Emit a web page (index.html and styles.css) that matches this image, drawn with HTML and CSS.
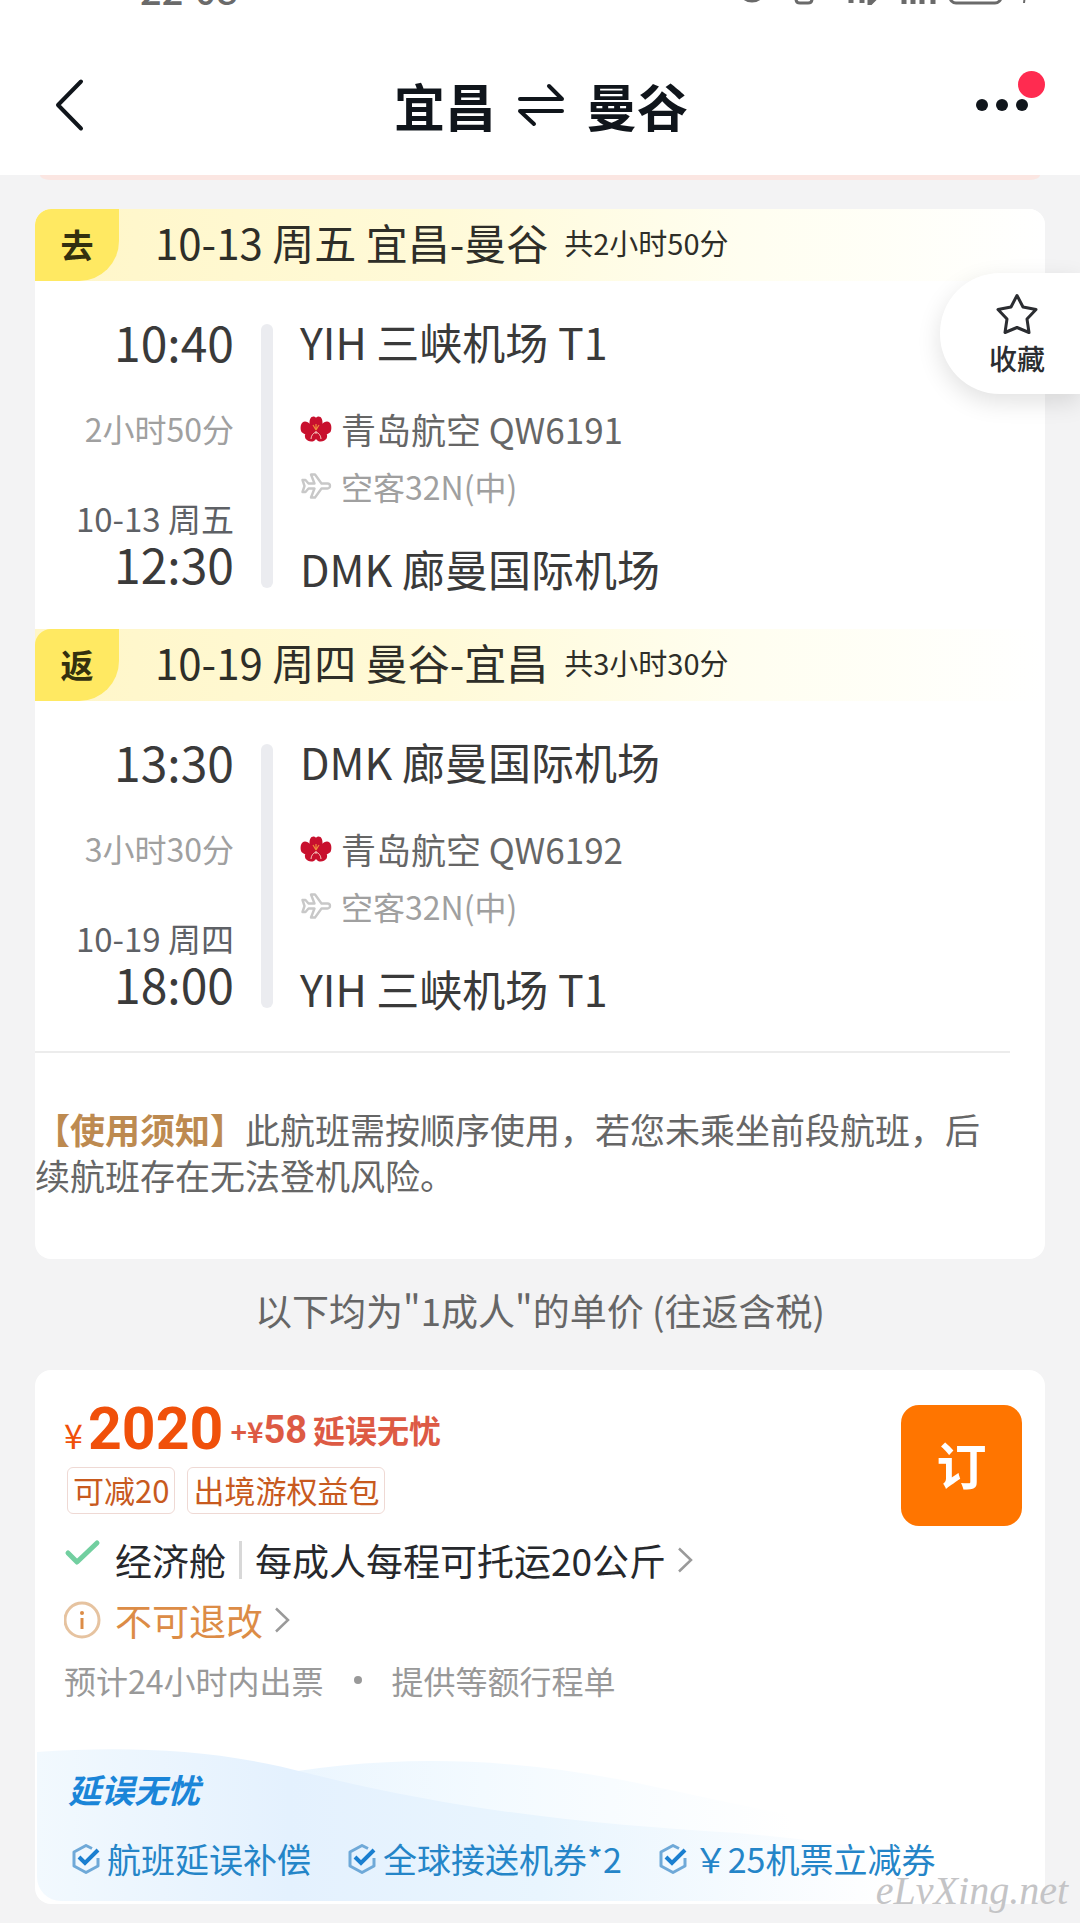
FILE: index.html
```html
<!DOCTYPE html>
<html lang="zh-CN">
<head>
<meta charset="utf-8">
<meta name="viewport" content="width=device-width, initial-scale=1">
<title>宜昌 ⇌ 曼谷</title>
<link rel="stylesheet" href="styles.css">
</head>
<body>
<svg class="defs" aria-hidden="true">
  <symbol id="flower" viewBox="0 0 32 26">
    <g fill="#c8102e">
      <path d="M16 15C8 12 8.500 4 11.500 1c2-1.200 3.500-.5 4.500.8 1-1.300 2.500-2 4.500-.8 3 3 3.500 11-4.500 14z"/>
      <path d="M16 16C12 8 6 3.500 2.500 6.500.5 8 0 13 1.500 16c4 4 11 4 14.500 0z"/>
      <path d="M16 16c4-8 10-12.500 13.500-9.500 2 1.500 2.500 6.500 1 9.500-4 4-11 4-14.500 0z"/>
      <path d="M16 13C8 13 3 18 5.500 22.500 8 26.500 14 26.500 16 23z"/>
      <path d="M16 13c8 0 13 5 10.500 9.500C24 26.500 18 26.500 16 23z"/>
    </g>
    <path d="M16 14l-3-5M16 14V8M16 14l3-5" stroke="#f08a3c" stroke-width="1.200" fill="none"/>
    <path d="M16 15v3M16 16c-3 1-5 4-5 7M16 16c3 1 5 4 5 7" stroke="#f4c4bc" stroke-width="1" fill="none"/>
  </symbol>
  <symbol id="plane" viewBox="0 0 30 26">
    <path d="M1.500 7h3l3 3.500h6L10 1.500h4l6.500 9h6a2.500 2.500 0 0 1 0 5h-6l-6.500 9h-4l3.500-9h-6l-3 3.500h-3l2-6z" fill="none" stroke="#c8c8c8" stroke-width="2.400" stroke-linejoin="round"/>
  </symbol>
  <symbol id="hexcheck" viewBox="0 0 28 30">
    <path d="M20 4.500L14 1.500 2 8v14l12 6.500L26 22v-8" fill="none" stroke="#6fa9d8" stroke-width="3" stroke-linejoin="round"/>
    <path d="M7 13l6 6L26 6" fill="none" stroke="#1a7fd0" stroke-width="4"/>
  </symbol>
  <symbol id="chevron" viewBox="0 0 16 26">
    <path d="M2 1.500L14 13 2 24.500" fill="none" stroke="#9a9a9a" stroke-width="2.500"/>
  </symbol>
</svg>

<header class="header">
  <div class="status">
    <span class="clock">22<span class="colon">:</span>08</span>
    <svg class="status-icons" width="300" height="40" viewBox="0 0 300 40" fill="none" stroke="#6a6a6a" stroke-width="3">
      <circle cx="19" cy="23" r="13"/>
      <path d="M63 16h16v18q0 4-4 4h-8q-4 0-4-4z"/>
      <path d="M118 32v6M129 30v8M137 14v24l5-5" stroke-width="5"/>
      <path d="M171 28v11M180 24v15M189 20v19M200 16v23" stroke-width="5"/>
      <rect x="217" y="14" width="51" height="24" rx="6"/>
      <path d="M292 30l-1 8" stroke-width="2"/>
    </svg>
  </div>
  <nav class="nav">
    <button class="icon-btn back" type="button" aria-label="返回">
      <svg width="30" height="54" viewBox="0 0 30 54"><path d="M27 3.500L4 27l23 23.500" fill="none" stroke="#10151b" stroke-width="4" stroke-linecap="round" stroke-linejoin="round"/></svg>
    </button>
    <h1 class="title">
      <span>宜昌</span>
      <svg width="50" height="44" viewBox="0 0 50 44" fill="none" stroke="#10151b" stroke-width="4" stroke-linecap="round" stroke-linejoin="round"><path d="M4 16h42L33 3M46 28H4l14 13"/></svg>
      <span>曼谷</span>
    </h1>
    <button class="icon-btn more" type="button" aria-label="更多">
      <svg width="52" height="12" viewBox="0 0 52 12" fill="#10151b"><circle cx="6" cy="6" r="6"/><circle cx="26" cy="6" r="6"/><circle cx="46" cy="6" r="6"/></svg>
      <span class="dot"></span>
    </button>
  </nav>
</header>

<main class="page">
  <div class="strip"></div>

  <section class="card trip">
    <div class="band">
      <span class="badge">去</span>
      <h2 class="route">10-13 周五 宜昌-曼谷</h2>
      <span class="total">共2小时50分</span>
    </div>
    <div class="leg">
      <div class="times">
        <span class="time">10:40</span>
        <span class="duration">2小时50分</span>
        <span class="arrive"><span class="date">10-13 周五</span><span class="time">12:30</span></span>
      </div>
      <div class="rail"></div>
      <div class="places">
        <span class="airport">YIH 三峡机场 T1</span>
        <span class="airline"><svg width="32" height="26"><use href="#flower"/></svg>青岛航空 QW6191</span>
        <span class="aircraft"><svg width="32" height="26"><use href="#plane"/></svg>空客32N(中)</span>
        <span class="airport last">DMK 廊曼国际机场</span>
      </div>
    </div>

    <div class="band">
      <span class="badge">返</span>
      <h2 class="route">10-19 周四 曼谷-宜昌</h2>
      <span class="total">共3小时30分</span>
    </div>
    <div class="leg">
      <div class="times">
        <span class="time">13:30</span>
        <span class="duration">3小时30分</span>
        <span class="arrive"><span class="date">10-19 周四</span><span class="time">18:00</span></span>
      </div>
      <div class="rail"></div>
      <div class="places">
        <span class="airport">DMK 廊曼国际机场</span>
        <span class="airline"><svg width="32" height="26"><use href="#flower"/></svg>青岛航空 QW6192</span>
        <span class="aircraft"><svg width="32" height="26"><use href="#plane"/></svg>空客32N(中)</span>
        <span class="airport last">YIH 三峡机场 T1</span>
      </div>
    </div>

    <p class="notice"><strong>【使用须知】</strong>此航班需按顺序使用，若您未乘坐前段航班，后续航班存在无法登机风险。</p>
  </section>

  <p class="caption">以下均为"1成人"的单价 (往返含税)</p>

  <section class="card fare">
    <div class="fare-main">
      <div class="fare-info">
        <div class="price">
          <span class="yen">¥</span><span class="amount">2020</span>
          <span class="extra"><span class="plus">+¥</span><span class="extra-num">58</span>延误无忧</span>
        </div>
        <div class="tags"><span class="tag">可减20</span><span class="tag">出境游权益包</span></div>
        <a class="row cabin" href="#baggage">
          <svg class="lead tick" width="37" height="28" viewBox="0 0 37 28"><path d="M4 15l9 9L33 5" fill="none" stroke="#72cfa0" stroke-width="5" stroke-linecap="round" stroke-linejoin="round"/></svg>
          <span>经济舱</span><span class="sep"></span><span>每成人每程可托运20公斤</span>
          <svg class="chev" width="16" height="26"><use href="#chevron"/></svg>
        </a>
        <a class="row refund" href="#refund">
          <svg class="lead" width="37" height="38" viewBox="0 0 37 38"><circle cx="18" cy="19" r="17" fill="none" stroke="#e6c3a0" stroke-width="3"/><circle cx="18" cy="12" r="2" fill="#dc8c46"/><path d="M18 17v11" stroke="#dc8c46" stroke-width="3"/></svg>
          <span>不可退改</span>
          <svg class="chev" width="16" height="26"><use href="#chevron"/></svg>
        </a>
        <p class="meta"><span>预计24小时内出票</span><i class="bullet"></i><span>提供等额行程单</span></p>
      </div>
      <button class="book" type="button">订</button>
    </div>

    <div class="perks">
      <svg class="wave" viewBox="0 0 1006 152" preserveAspectRatio="none" aria-hidden="true">
        <defs>
          <linearGradient id="wa"><stop offset="0" stop-color="#f2f9fe"/><stop offset=".25" stop-color="#e4f1fe"/><stop offset=".5" stop-color="#e9f5fe"/><stop offset=".85" stop-color="#ffffff"/></linearGradient>
          <linearGradient id="wb"><stop offset="0" stop-color="#e8f4fe"/><stop offset=".4" stop-color="#f3faff"/><stop offset=".85" stop-color="#ffffff"/></linearGradient>
        </defs>
        <path d="M170 40C300 8 430 2 580 30C680 50 740 66 860 84V152H170z" fill="url(#wb)"/>
        <path d="M0 3C90-3 180 0 270 24C420 62 560 76 700 84C800 92 900 110 1006 130V152H0z" fill="url(#wa)"/>
      </svg>
      <h3 class="perks-title">延误无忧</h3>
      <ul class="perk-list">
        <li><svg width="28" height="30"><use href="#hexcheck"/></svg>航班延误补偿</li>
        <li><svg width="28" height="30"><use href="#hexcheck"/></svg>全球接送机券*2</li>
        <li><svg width="28" height="30"><use href="#hexcheck"/></svg>￥25机票立减券</li>
      </ul>
    </div>
  </section>
</main>

<button class="fav" type="button">
  <svg width="42" height="42" viewBox="0 0 42 42"><path d="M21 2.500l6 11.500 13 2.500-9 9.500 2 13.500-12-5-12 5 2-13.500-9-9.500 13-2.500z" fill="none" stroke="#2b2d31" stroke-width="3" stroke-linejoin="round"/></svg>
  <span>收藏</span>
</button>
<span class="watermark">eLvXing.net</span>
</body>
</html>
```

FILE: styles.css
```css
* { box-sizing: border-box; }

body {
  position: relative;
  margin: 0;
  background: #f3f3f4;
  color: #3a3a3a;
  font-family: "Noto Sans CJK SC", sans-serif;
}

h1, h2, h3, p, ul { margin: 0; padding: 0; font-weight: inherit; }
ul { list-style: none; }
a { color: inherit; text-decoration: none; }
button { border: 0; padding: 0; background: none; font-family: inherit; cursor: pointer; }
svg { display: block; flex: none; }
.defs { position: absolute; width: 0; height: 0; }

/* Header */
.header { height: 175px; background: #fff; overflow: hidden; }
.status {
  display: flex;
  justify-content: space-between;
  align-items: flex-end;
  height: 40px;
  margin-top: -35px;
  padding: 0 47px 0 140px;
  color: #6a6a6a;
}
.clock { font-size: 38px; font-weight: 500; line-height: 32px; }
.colon { vertical-align: 6px; line-height: 20px; }
.nav {
  display: grid;
  grid-template-columns: 1fr auto 1fr;
  align-items: center;
  height: 140px;
  margin-top: 30px;
  padding: 0 52px 0 54px;
}
.icon-btn { display: flex; align-items: center; height: 54px; }
.more { position: relative; justify-self: end; }
.dot {
  position: absolute;
  top: -7px;
  right: -17px;
  width: 27px;
  height: 27px;
  border-radius: 50%;
  background: #ff2b50;
}
.title {
  display: flex;
  align-items: center;
  gap: 20px;
  color: #10151b;
  font-size: 51px;
  font-weight: 700;
  line-height: 60px;
}

/* Page */
.page { padding: 0 35px 19px; }
.strip { height: 5px; margin: 0 5px; background: #fbe6e2; border-radius: 0 0 10px 10px / 0 0 5px 5px; }
.card { background: #fff; border-radius: 16px; overflow: hidden; }
.trip { margin-top: 29px; padding-bottom: 61px; }

.band {
  display: flex;
  align-items: center;
  height: 72px;
  background: linear-gradient(90deg, #fff6c8, #fffad8 40%, #fffef0 70%, #fff);
  color: #2e2e28;
}
.badge {
  width: 84px;
  height: 72px;
  padding-bottom: 2px;
  border-radius: 16px 0 40px 0;
  background: #ffe962;
  color: #33300f;
  font-size: 33px;
  font-weight: 700;
  line-height: 70px;
  text-align: center;
}
.route, .total { padding-bottom: 6px; line-height: 60px; }
.route { margin-left: 36px; font-size: 42px; }
.total { margin-left: 16px; font-size: 29px; }

.leg {
  display: grid;
  grid-template-columns: 199px 12px 1fr;
  column-gap: 27px;
  padding: 40px 0 41px;
}
.rail { height: 264px; margin-top: 3px; border-radius: 6px; background: #ebecf0; }
.times, .places { display: flex; flex-direction: column; line-height: 40px; }
.times { align-items: flex-end; }
.time { font-size: 48px; }
.duration { margin-top: 47px; color: #a0a0a0; font-size: 32px; }
.arrive { display: flex; flex-direction: column; align-items: flex-end; margin-top: auto; }
.arrive .time { line-height: 50px; }
.date { color: #5e6166; font-size: 33px; }
.airport { font-size: 43px; }
.airline, .aircraft { display: flex; align-items: center; gap: 9px; }
.airline { margin-top: 48px; color: #666; font-size: 35px; }
.aircraft { margin-top: 17px; color: #a0a0a0; font-size: 32px; }
.last { margin-top: auto; }

.notice {
  margin: 2px 35px 0 0;
  padding-top: 53px;
  border-top: 2px solid #ececec;
  color: #666;
  font-size: 35px;
  line-height: 46px;
}
.notice strong { color: #bd8a50; font-weight: 700; }

.caption {
  padding: 21px 0 30px;
  color: #666;
  font-size: 37px;
  line-height: 60px;
  text-align: center;
}

/* Fare */
.fare { padding: 0 2px 3px; }
.fare-main {
  display: flex;
  justify-content: space-between;
  align-items: flex-start;
  padding: 35px 21px 47px 27px;
}
.price { display: flex; align-items: baseline; height: 62px; color: #f0500a; line-height: 48px; }
.yen { width: 24px; font-size: 34px; }
.amount { font-family: Roboto, sans-serif; font-size: 59px; font-weight: 700; }
.extra {
  display: flex;
  align-self: flex-start;
  align-items: baseline;
  margin-left: 7px;
  color: #dd5a44;
  font-size: 32px;
  font-weight: 700;
}
.plus { font-size: 28px; }
.extra-num { margin-right: 6px; font-family: Roboto, sans-serif; font-size: 38px; }
.tags { display: flex; gap: 12px; padding-left: 3px; }
.tag {
  height: 47px;
  padding: 0 5px;
  border: 1px solid #efd9d4;
  border-radius: 6px;
  color: #c85a1e;
  font-size: 31px;
  line-height: 44px;
}
.row { display: flex; align-items: center; height: 44px; font-size: 37px; line-height: 44px; }
.lead { margin-right: 14px; }
.tick { align-self: flex-start; }
.chev { margin-left: 11px; }
.cabin { margin-top: 24px; color: #26282c; }
.sep { width: 3px; height: 38px; margin: 0 13px; background: #d8d8d8; }
.refund { margin-top: 16px; color: #dc8c46; }
.meta {
  display: flex;
  align-items: center;
  gap: 30px;
  margin-top: 16px;
  color: #999;
  font-size: 32px;
  line-height: 44px;
}
.bullet { width: 8px; height: 8px; border-radius: 50%; background: #999; }
.book {
  width: 121px;
  height: 121px;
  padding-bottom: 5px;
  border-radius: 18px;
  background: #ff7500;
  color: #fff;
  font-size: 50px;
  font-weight: 700;
}

.perks {
  position: relative;
  height: 152px;
  padding: 20px 31px 0;
  border-radius: 0 0 24px 24px;
  overflow: hidden;
  color: #2485c8;
}
.wave { position: absolute; inset: 0; width: 100%; height: 100%; }
.perks-title, .perk-list { position: relative; }
.perks-title { color: #1a85d8; font-size: 33px; font-style: italic; font-weight: 700; line-height: 40px; }
.perk-list {
  display: flex;
  gap: 37px;
  margin-top: 28px;
  padding-left: 4px;
  font-size: 34px;
  line-height: 44px;
  white-space: nowrap;
}
.perk-list li { display: flex; align-items: center; gap: 7px; }

/* Floating pieces */
.fav {
  position: absolute;
  top: 273px;
  right: 0;
  display: flex;
  flex-direction: column;
  align-items: center;
  width: 140px;
  height: 121px;
  padding: 20px 35px 0 49px;
  border-radius: 60px 0 0 60px;
  background: #fff;
  box-shadow: 0 8px 24px rgba(0, 0, 0, 0.12);
  color: #2b2d31;
  font-size: 28px;
  font-weight: 500;
  line-height: 46px;
  white-space: nowrap;
}
.watermark {
  position: absolute;
  right: 12px;
  bottom: 12px;
  color: #c4c4c6;
  font-family: "Liberation Serif", serif;
  font-size: 40px;
  font-style: italic;
  line-height: 40px;
}
```
